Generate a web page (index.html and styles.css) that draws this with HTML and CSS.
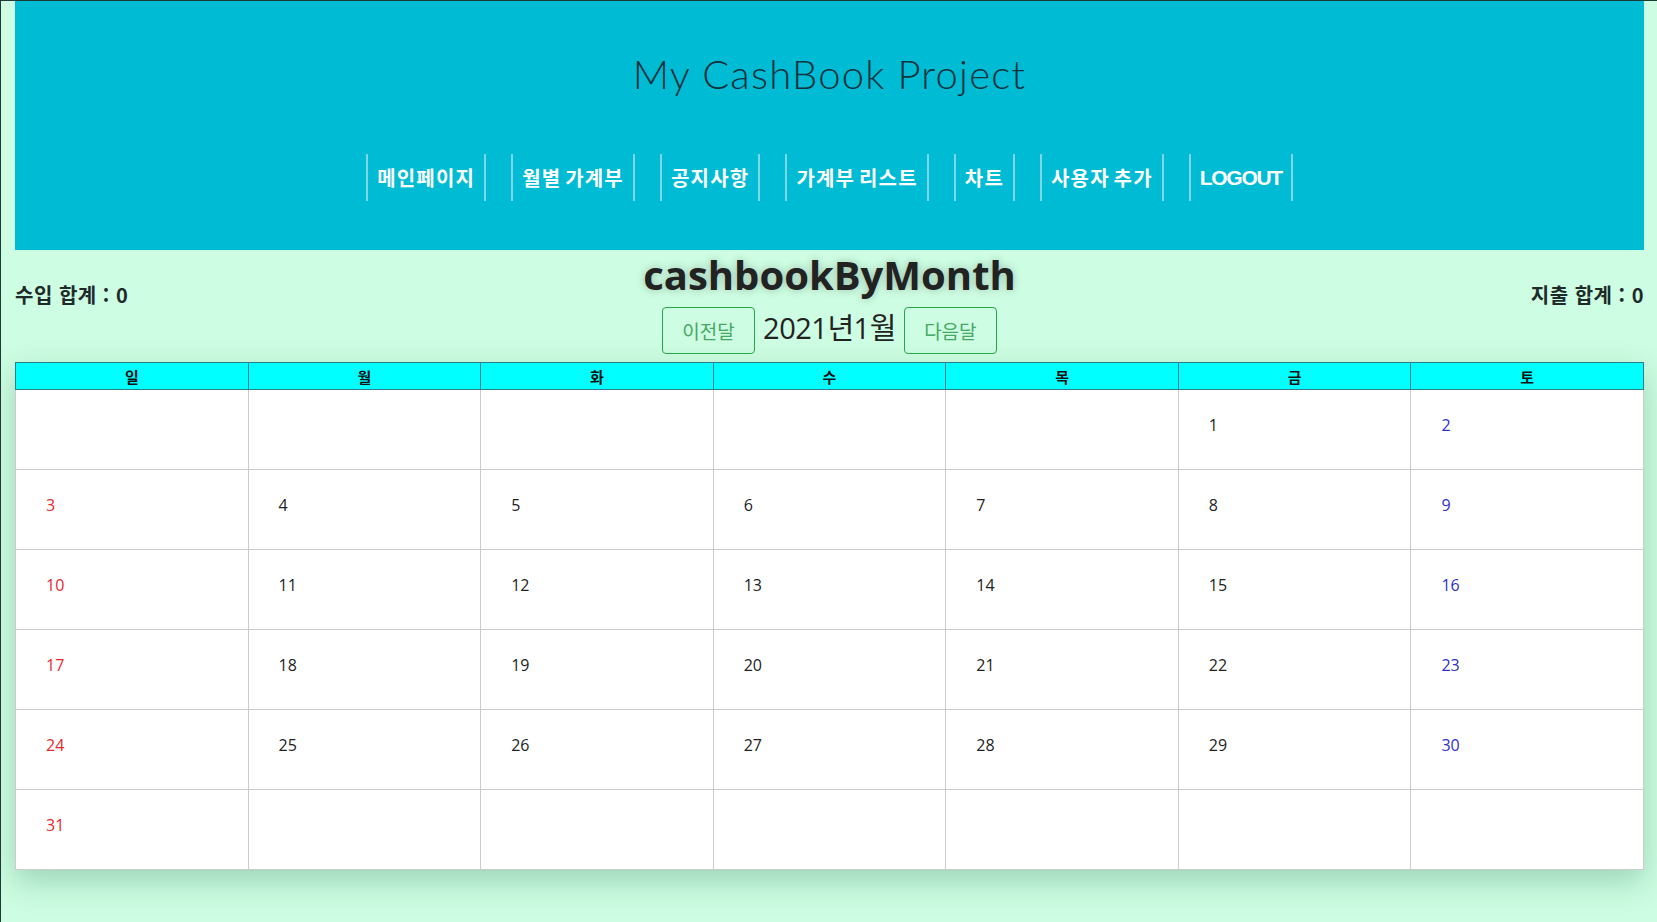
FILE: index.html
```html
<!DOCTYPE html>
<html lang="ko">
<head>
<meta charset="utf-8">
<title>cashbookByMonth</title>
<link rel="stylesheet" href="styles.css">
</head>
<body>
<div class="page">
  <header class="header">
    <h1 class="brand">My CashBook Project</h1>
    <nav class="nav">
      <a class="nav-item">메인페이지</a>
      <a class="nav-item">월별 가계부</a>
      <a class="nav-item">공지사항</a>
      <a class="nav-item">가계부 리스트</a>
      <a class="nav-item">차트</a>
      <a class="nav-item">사용자 추가</a>
      <a class="nav-item nav-latin">LOGOUT</a>
    </nav>
  </header>

  <section class="summary">
    <div class="total total-left">수입 합계 : 0</div>
    <div class="center">
      <h2 class="page-title">cashbookByMonth</h2>
      <div class="month-nav">
        <button class="btn">이전달</button>
        <span class="month">2021년1월</span>
        <button class="btn">다음달</button>
      </div>
    </div>
    <div class="total total-right">지출 합계 : 0</div>
  </section>

  <table class="calendar">
    <thead>
      <tr><th>일</th><th>월</th><th>화</th><th>수</th><th>목</th><th>금</th><th>토</th></tr>
    </thead>
    <tbody>
      <tr><td></td><td></td><td></td><td></td><td></td><td>1</td><td class="sat">2</td></tr>
      <tr><td class="sun">3</td><td>4</td><td>5</td><td>6</td><td>7</td><td>8</td><td class="sat">9</td></tr>
      <tr><td class="sun">10</td><td>11</td><td>12</td><td>13</td><td>14</td><td>15</td><td class="sat">16</td></tr>
      <tr><td class="sun">17</td><td>18</td><td>19</td><td>20</td><td>21</td><td>22</td><td class="sat">23</td></tr>
      <tr><td class="sun">24</td><td>25</td><td>26</td><td>27</td><td>28</td><td>29</td><td class="sat">30</td></tr>
      <tr><td class="sun">31</td><td></td><td></td><td></td><td></td><td></td><td></td></tr>
    </tbody>
  </table>
</div>
</body>
</html>
```

FILE: styles.css
```css
html, body {
  margin: 0;
  padding: 0;
}
body {
  background: #cdfde2;
  font-family: "Open Sans", "Noto Sans CJK KR", sans-serif;
  color: #212529;
  height: 922px;
  overflow: hidden;
  border-left: 1px solid #1d3b36;
  border-top: 1px solid #1d3b36;
  box-sizing: border-box;
}
.page {
  padding: 0 13px 0 14px;
}
.header {
  background: #00bbd4;
  height: 249px;
  display: flex;
  flex-direction: column;
  align-items: center;
}
.brand {
  margin: 53px 0 0;
  font-family: "Lato", "Open Sans", sans-serif;
  font-weight: 300;
  font-size: 40px;
  line-height: 40px;
  letter-spacing: 1.2px;
  color: #15323c;
}
.nav {
  margin-top: 60px;
  display: flex;
  gap: 25px;
}
.nav-item {
  display: flex;
  align-items: center;
  height: 47px;
  padding: 0 9px;
  border-left: 2px solid #7fd6e6;
  border-right: 2px solid #7fd6e6;
  color: #ffffff;
  font-family: "Noto Sans CJK KR", sans-serif;
  font-weight: 700;
  font-size: 20px;
  letter-spacing: 1.2px;
  word-spacing: -3px;
}
.nav-latin {
  font-family: "Liberation Sans", "Noto Sans CJK KR", sans-serif;
  font-size: 21px;
  letter-spacing: -1.3px;
}
.summary {
  display: flex;
  align-items: center;
  justify-content: space-between;
  padding-top: 2px;
}
.total {
  width: 300px;
  font-family: "Noto Sans CJK KR", sans-serif;
  font-weight: 700;
  font-size: 20px;
  letter-spacing: 0.5px;
  color: #1f2a2a;
  padding-bottom: 18px;
}
.total-right {
  text-align: right;
}
.center {
  display: flex;
  flex-direction: column;
  align-items: center;
}
.page-title {
  margin: 0;
  font-family: "Open Sans", sans-serif;
  font-weight: 700;
  font-size: 40px;
  line-height: 46px;
  color: #222;
  text-shadow: 0 0 8px rgba(0, 0, 0, 0.25);
}
.month-nav {
  display: flex;
  align-items: center;
  gap: 8px;
  margin-top: 9px;
}
.btn {
  width: 93px;
  height: 47px;
  background: transparent;
  border: 1px solid #28a745;
  border-radius: 4px;
  color: #46a862;
  font-family: "Noto Sans CJK KR", sans-serif;
  font-size: 19px;
  padding: 0;
}
.month {
  font-family: "Open Sans", "Noto Sans CJK KR", sans-serif;
  font-size: 29px;
  line-height: 38px;
  color: #222;
  letter-spacing: -0.5px;
  padding-bottom: 6px;
}
.calendar {
  margin-top: 8px;
  width: 100%;
  border-collapse: collapse;
  table-layout: fixed;
  background: #fff;
  border: 1px solid #355f6e;
  box-shadow: 0 12px 28px rgba(40, 110, 80, 0.28);
}
.calendar th {
  background: #00ffff;
  height: 26px;
  padding: 0;
  border: 1px solid #2c7d8c;
  font-family: "Noto Sans CJK KR", sans-serif;
  font-weight: 700;
  font-size: 15px;
  color: #111;
}
.calendar td {
  height: 80px;
  padding: 0 0 10px 30px;
  box-sizing: border-box;
  border: 1px solid #cccccc;
  font-size: 16px;
  color: #222;
  vertical-align: middle;
}
.calendar td.sun {
  color: #e8282f;
}
.calendar td.sat {
  color: #3030cc;
}
```
